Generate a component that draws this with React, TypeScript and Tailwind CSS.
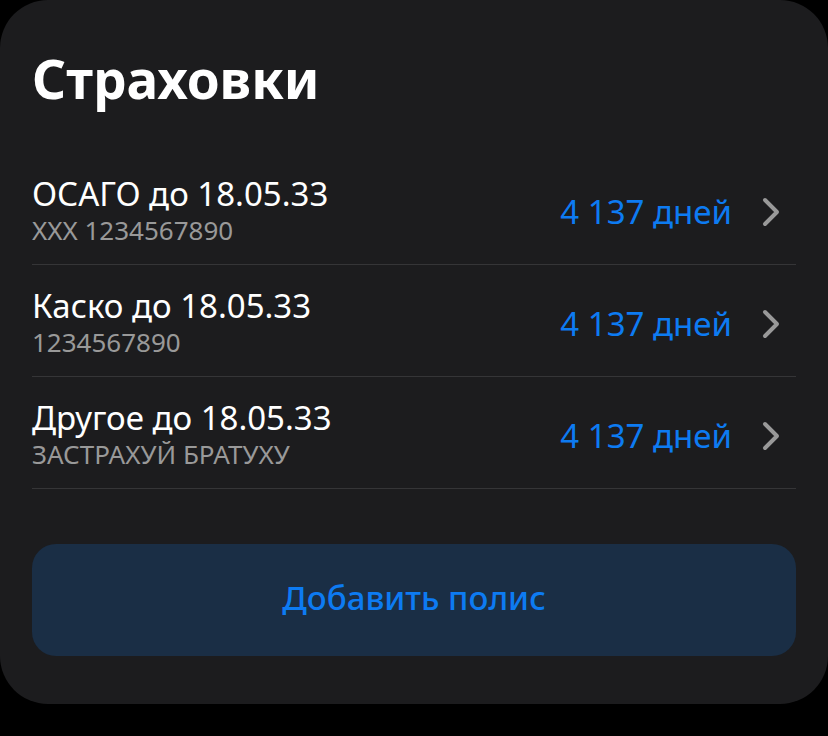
const policies = [
  { title: "ОСАГО до 18.05.33", number: "XXX 1234567890", left: "4 137 дней" },
  { title: "Каско до 18.05.33", number: "1234567890", left: "4 137 дней" },
  { title: "Другое до 18.05.33", number: "ЗАСТРАХУЙ БРАТУХУ", left: "4 137 дней" },
];

export default function App() {
  return (
    <div className="min-h-screen bg-black font-['Noto_Sans',sans-serif]">
      <main className="rounded-[48px] bg-[#1c1c1e] px-8 pt-[45px] pb-12">
        <h1 className="text-[53px] leading-17 font-bold text-white">Страховки</h1>
        <ul className="mt-10">
          {policies.map((policy) => (
            <li key={policy.title} className="flex h-28 border-b border-[#353537] pt-[7px]">
              <button type="button" className="flex w-full items-center text-left">
                <span className="flex grow flex-col pb-1">
                  <span className="text-[33px] leading-10 text-white">{policy.title}</span>
                  <span className="text-[26px] leading-8 text-[#999999]">{policy.number}</span>
                </span>
                <span className="text-[33px] leading-10 text-[#0d7bf2]">{policy.left}</span>
                <svg className="mr-4 ml-7 h-8 w-5" viewBox="0 0 20 32" fill="none" stroke="#999999" strokeWidth="4" strokeLinecap="round" strokeLinejoin="round" aria-hidden="true">
                  <path d="M5 4l12 12-12 12" />
                </svg>
              </button>
            </li>
          ))}
        </ul>
        <button type="button" className="mt-[55px] h-28 w-full rounded-3xl bg-[#1a2e45] pb-1 text-[33px] font-medium text-[#0d7bf2]">
          Добавить полис
        </button>
      </main>
    </div>
  );
}
